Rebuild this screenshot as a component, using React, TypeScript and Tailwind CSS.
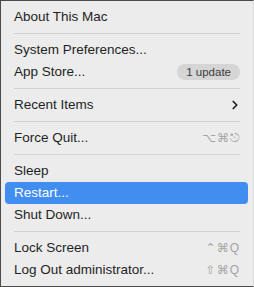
import { ChevronRight } from "lucide-react";

type Item = {
  label: string;
  shortcut?: string;
  badge?: string;
  submenu?: boolean;
  active?: boolean;
};

const groups: Item[][] = [
  [{ label: "About This Mac" }],
  [
    { label: "System Preferences..." },
    { label: "App Store...", badge: "1 update" },
  ],
  [{ label: "Recent Items", submenu: true }],
  [{ label: "Force Quit...", shortcut: "⌥⌘⎋" }],
  [
    { label: "Sleep" },
    { label: "Restart...", active: true },
    { label: "Shut Down..." },
  ],
  [
    { label: "Lock Screen", shortcut: "⌃⌘Q" },
    { label: "Log Out administrator...", shortcut: "⇧⌘Q" },
  ],
];

function MenuRow({ item }: { item: Item }) {
  return (
    <div
      className={`flex h-[22px] items-center justify-between rounded-[4px] pl-[9px] pr-[8px] ${
        item.active ? "bg-[#418df0] text-white" : "text-[#1f1f1f]"
      }`}
    >
      <span>{item.label}</span>
      {item.badge && (
        <span className="rounded-full bg-[#d5d5d5] px-[9px] py-[1px] text-[11.5px] leading-[14px] text-[#3a3a3a]">
          {item.badge}
        </span>
      )}
      {item.submenu && <ChevronRight size={14} strokeWidth={3} className="mr-[-2px] text-[#1f1f1f]" />}
      {item.shortcut && (
        <span className="tracking-[1px] text-[12px] text-[#a3a3a3]">{item.shortcut}</span>
      )}
    </div>
  );
}

export default function App() {
  return (
    <div className="h-[287px] w-[254px] overflow-hidden bg-[#ececec]">
      <div
        className="flex h-full flex-col border-y border-l border-r border-y-[#4b4b4b] border-l-[#4b4b4b] border-r-[#dcdcdc] pb-[5px] pl-[4px] pr-[5px] pt-[5px] text-[13.5px]"
        style={{ fontFamily: '"Liberation Sans", "DejaVu Sans", sans-serif' }}
      >
        {groups.map((group, gi) => (
          <div key={gi}>
            {gi > 0 && (
              <div className="py-[5px] pl-[9px] pr-[8px]">
                <div className="h-px bg-[#d3d3d3]" />
              </div>
            )}
            {group.map((item) => (
              <MenuRow key={item.label} item={item} />
            ))}
          </div>
        ))}
      </div>
    </div>
  );
}
